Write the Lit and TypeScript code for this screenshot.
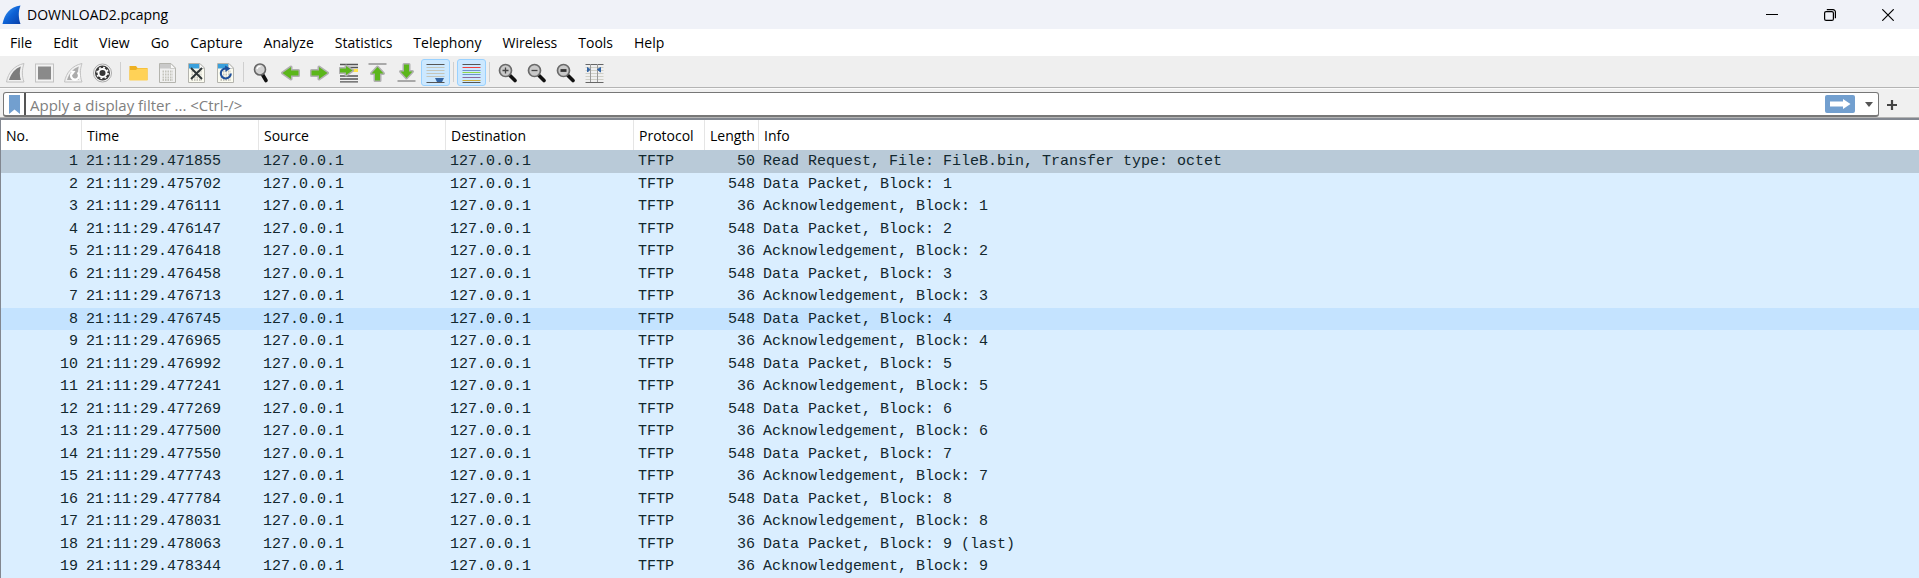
import { LitElement, html, css, svg } from "lit";
import { customElement, state } from "lit/decorators.js";

interface Packet {
  no: number;
  time: string;
  length: number;
  info: string;
}

const data = (no: number, time: string, block: number, length = 548, note = ""): Packet => ({
  no,
  time: `21:11:29.${time}`,
  length,
  info: `Data Packet, Block: ${block}${note}`,
});
const ack = (no: number, time: string, block: number): Packet => ({
  no,
  time: `21:11:29.${time}`,
  length: 36,
  info: `Acknowledgement, Block: ${block}`,
});

const PACKETS: Packet[] = [
  { no: 1, time: "21:11:29.471855", length: 50, info: "Read Request, File: FileB.bin, Transfer type: octet" },
  data(2, "475702", 1),
  ack(3, "476111", 1),
  data(4, "476147", 2),
  ack(5, "476418", 2),
  data(6, "476458", 3),
  ack(7, "476713", 3),
  data(8, "476745", 4),
  ack(9, "476965", 4),
  data(10, "476992", 5),
  ack(11, "477241", 5),
  data(12, "477269", 6),
  ack(13, "477500", 6),
  data(14, "477550", 7),
  ack(15, "477743", 7),
  data(16, "477784", 8),
  ack(17, "478031", 8),
  data(18, "478063", 9, 36, " (last)"),
  ack(19, "478344", 9),
];

const MENUS = ["File", "Edit", "View", "Go", "Capture", "Analyze", "Statistics", "Telephony", "Wireless", "Tools", "Help"];

const FIN = "M.5 19C2 10 8 2.500 18 .5C15.800 7 15.800 13 18 19Z";
const RIGHT_ARROW = "M1.5 7.500H9V4L17.500 10L9 16V12.500H1.500Z";

const page = (colour: string, paper: string) => svg`
  <path d="M1.500 .5H13L17.500 5V19.500H1.500Z" fill=${paper} stroke="#b4b4ae"/>
  <path d="M2 1H12.500V5.500H2Z" fill=${colour}/>
  <path d="M12.500 .5V5.500H17.500Z" fill="#f8f8f8" stroke="#b4b4ae" stroke-width=".6"/>
  <path d="M4.500 8.500H15M4.500 11.500H15M4.500 14.500H15M4.500 17H15" stroke="#c4c4bc" stroke-width="1.800" stroke-dasharray="1.500 1"/>`;

const lens = (inner: unknown) => svg`
  <path d="M12 12.500L17 17.500" stroke="#111" stroke-width="3.600" stroke-linecap="round"/>
  <circle cx="7.500" cy="7.500" r="6" fill="#c9c9c9" stroke="#6a6a6a" stroke-width="1.700"/>
  ${inner}`;

const verticalArrow = (d: string, bar: string) => svg`
  <path d=${bar} stroke="#a9a9a9" stroke-width="2"/>
  <path class="arrow" d=${d}/>`;

const GLYPHS: Record<string, unknown> = {
  start: svg`<path d=${FIN} fill="#f0f0f0" stroke="#c2c2c2"/><path d="M3 17C5 10.500 9 5.500 14.800 3.500C13.500 8 13.500 12.500 14.800 17Z" fill="#7c7c7c"/>`,
  stop: svg`<rect x=".5" y="1" width="18" height="18" fill="#f2f2f2" stroke="#c2c2c2"/><rect x="3" y="3.500" width="13" height="13" fill="#8a8a8a"/>`,
  restart: svg`<path d=${FIN} fill="#f0f0f0" stroke="#c2c2c2"/><path d="M3 17C5 10.500 9 5.500 14.800 3.500C13.500 8 13.500 12.500 14.800 17Z" fill="#acacac"/>
    <path d="M8 10A4 4 0 1 0 13.500 9.500" fill="none" stroke="#fff" stroke-width="2.200"/><path d="M6.500 7.500L11.500 8L8.500 12Z" fill="#fff"/>`,
  options: svg`<circle cx="9.500" cy="10" r="9" fill="#f5f5f5" stroke="#aaa"/><circle cx="9.500" cy="10" r="7.500" fill="#383838"/>
    <circle cx="9.500" cy="10" r="4" fill="none" stroke="#fff" stroke-width="1.900"/>
    <circle cx="9.500" cy="10" r="5.500" fill="none" stroke="#fff" stroke-width="1.600" stroke-dasharray="1.900 2.420"/><circle cx="9.500" cy="10" r="1.900" fill="#383838"/>`,
  open: svg`<path d="M.5 3H7L8.500 5H18.500V17H.5Z" fill="#eeb122"/><path d="M.5 7H7L8.500 5.500H18.500V17.500H.5Z" fill="#ffd257"/>`,
  save: page("#c9c9c9", "#f0f0f0"),
  close: svg`${page("#3aa0dc", "#fbfbf0")}<path d="M4 5L15 16M15 5L4 16" stroke="#2d3436" stroke-width="1.900"/>`,
  reload: svg`${page("#3aa0dc", "#fbfbf0")}<path d="M10.500 5.500A5 5 0 1 0 14.800 10.500" fill="none" stroke="#1f4f9a" stroke-width="2.100"/><path d="M9 2.500L14.500 5.500L9.500 9Z" fill="#1f4f9a"/>`,
  find: svg`<path d="M10.500 11.500L14 17.500" stroke="#111" stroke-width="3.600" stroke-linecap="round"/><circle cx="8" cy="6.500" r="5.500" fill="#d2d2d2" stroke="#666" stroke-width="1.600"/><path d="M5 6A3.200 3.200 0 0 1 8.500 3.500" fill="none" stroke="#fff" stroke-width="1.300"/>`,
  back: svg`<path class="arrow" d=${RIGHT_ARROW} transform="matrix(-1 0 0 1 19 0)"/>`,
  forward: svg`<path class="arrow" d=${RIGHT_ARROW}/>`,
  goto: svg`<path d="M1 1.500H19M9 4.500H19M1 13H19M1 16H19M1 18.800H19" stroke="#555" stroke-width="1.300"/><path d="M13 7.500H19" stroke="#ffe34d" stroke-width="3"/>
    <path class="arrow" d="M1 5.500H7V3L13.500 7.500L7 12V9.500H1Z"/>`,
  first: verticalArrow("M9.500 4L15.500 10.500H12V17.500H7V10.500H3.500Z", "M.5 1H18.500"),
  last: verticalArrow("M9.500 15L15.500 8.500H12V1.500H7V8.500H3.500Z", "M.5 18H18.500"),
  autoscroll: svg`<path d="M.5 1.500H18.500M.5 19.500H18.500" stroke="#555"/><path d="M.5 4.500H18.500M.5 7.500H18.500M.5 10.500H18.500M.5 13.500H18.500" stroke="#c5c5ba"/>
    <path d="M9 15H18L16 19H11Z" fill="#3465a4"/>`,
  colorize: svg`<path d="M.5 1.500H18.500M.5 19.500H18.500" stroke="#555"/><path d="M.5 4.500H18.500" stroke="#f0403c"/><path d="M.5 7.500H18.500" stroke="#6f93c8"/><path d="M.5 9.500H18.500" stroke="#8fd64c"/><path d="M.5 11.500H18.500" stroke="#6f93c8"/><path d="M.5 14.500H18.500" stroke="#8a6a9a"/><path d="M.5 17.500H18.500" stroke="#cfae3a"/>`,
  zoomIn: lens(svg`<path d="M4.500 7.500H10.500M7.500 4.500V10.500" stroke="#444" stroke-width="1.300"/>`),
  zoomOut: lens(svg`<path d="M4.500 7.500H10.500" stroke="#444" stroke-width="1.300"/>`),
  zoomReset: lens(svg`<path d="M4.500 7.500H10.500" stroke="#333" stroke-width="2.800"/>`),
  resize: svg`<path d="M.5 4.500H18.500M.5 7.500H18.500M.5 10.500H18.500M.5 13.500H18.500M.5 16.500H18.500" stroke="#cfcfc6"/><path d="M.5 1.500H18.500M.5 19.500H18.500" stroke="#666"/>
    <path d="M5.500 1V19M12.500 1V19" stroke="#999"/><path d="M2.500 4.500L5 6.500L2.500 9ZM15.500 4.500L12.500 6.500L15.500 9Z" fill="#3465a4" stroke="#3465a4"/>`,
};

interface Tool {
  glyph: string;
  label: string;
  toggle?: boolean;
}

const TOOL_GROUPS: Tool[][] = [
  [
    { glyph: "start", label: "Start capturing packets" },
    { glyph: "stop", label: "Stop capturing packets" },
    { glyph: "restart", label: "Restart current capture" },
    { glyph: "options", label: "Capture options" },
  ],
  [
    { glyph: "open", label: "Open a capture file" },
    { glyph: "save", label: "Save this capture file" },
    { glyph: "close", label: "Close this capture file" },
    { glyph: "reload", label: "Reload this file" },
  ],
  [
    { glyph: "find", label: "Find a packet" },
    { glyph: "back", label: "Go back in packet history" },
    { glyph: "forward", label: "Go forward in packet history" },
    { glyph: "goto", label: "Go to specified packet" },
    { glyph: "first", label: "Go to the first packet" },
    { glyph: "last", label: "Go to the last packet" },
    { glyph: "autoscroll", label: "Automatically scroll during live capture", toggle: true },
  ],
  [{ glyph: "colorize", label: "Draw packets using your coloring rules", toggle: true }],
  [
    { glyph: "zoomIn", label: "Enlarge the main window text" },
    { glyph: "zoomOut", label: "Shrink the main window text" },
    { glyph: "zoomReset", label: "Return the main window text to its normal size" },
    { glyph: "resize", label: "Resize packet list columns to fit contents" },
  ],
];

@customElement("app-root")
export class AppRoot extends LitElement {
  @state() private active = new Set(["autoscroll", "colorize"]);
  @state() private selected = 1;

  static styles = css`
    :host {
      display: block;
      background: #f0f0f0;
      color: #000;
      font: 14px/20px "Open Sans", "Noto Sans", sans-serif;
    }
    * { box-sizing: border-box; }
    button {
      margin: 0;
      padding: 0;
      border: 0;
      background: none;
      color: inherit;
      font: inherit;
    }
    svg { display: block; }
    .title {
      display: flex;
      align-items: center;
      height: 29px;
      padding: 0 2px;
      background: #f0f2f8;
    }
    .title h1 {
      flex: 1;
      margin: 0 0 0 6px;
      font-size: 14px;
      font-weight: 400;
    }
    .window-button {
      display: grid;
      place-items: center;
      width: 58px;
      height: 28px;
    }
    .menu {
      display: flex;
      gap: 1px;
      height: 27px;
      background: #fff;
    }
    .menu button { padding: 0 10px; }
    .tools {
      display: flex;
      align-items: center;
      height: 32px;
      padding: 2px 1px 0;
      border-bottom: 1px solid #b4b4b4;
      background: #efefef;
    }
    .group { display: flex; }
    .group + .group::before {
      content: "";
      width: 1px;
      height: 20px;
      margin: 3px;
      background: #cfcfcf;
    }
    .tool {
      display: grid;
      place-items: center;
      width: 29px;
      height: 27px;
      border: 1px solid transparent;
      border-radius: 3px;
    }
    .tool[aria-pressed="true"] {
      border-color: #99d1ff;
      background: #cce8ff;
    }
    .arrow {
      fill: #5bb61a;
      stroke: #b0b0b0;
      stroke-width: 3;
      stroke-linejoin: round;
      paint-order: stroke;
    }
    .filter {
      display: flex;
      align-items: center;
      padding: 3px 0 0 3px;
      border-top: 1px solid #fafafa;
      border-bottom: 1px solid #b4b4b4;
    }
    .field {
      display: flex;
      flex: 1;
      align-items: center;
      height: 25px;
      border: 1px solid #777;
      border-bottom-width: 2px;
      border-radius: 3px;
      background: #fff;
    }
    .bookmark {
      display: grid;
      place-items: center;
      align-self: stretch;
      width: 22px;
      border-right: 2px solid #555;
    }
    .field input {
      flex: 1;
      min-width: 0;
      height: 22px;
      padding: 1px 4px 0;
      border: 0;
      outline: 0;
      background: none;
      font: inherit;
      font-size: 15px;
    }
    .field input::placeholder { color: #808080; opacity: 1; }
    .drop {
      display: grid;
      place-items: center;
      width: 23px;
      height: 20px;
      padding-left: 4px;
    }
    .add {
      display: grid;
      place-items: center;
      width: 25px;
      height: 24px;
      margin-right: 15px;
    }
    .packets {
      width: 100%;
      border-top: 2px solid #828790;
      border-left: 1px solid #828790;
      border-spacing: 0;
      table-layout: fixed;
      background: #fff;
    }
    .c-no { width: 81px; }
    .c-time { width: 177px; }
    .c-source { width: 187px; }
    .c-destination { width: 188px; }
    .c-protocol { width: 71px; }
    .c-length { width: 54px; }
    th {
      height: 30px;
      padding: 2px 3px 0 5px;
      border-right: 1px solid #e5e5e5;
      font-weight: 400;
      text-align: left;
      white-space: nowrap;
      overflow: hidden;
    }
    th:last-child { border-right: 0; }
    td {
      height: 22px;
      padding: 2px 4px 0;
      background: #daeeff;
      color: #12272e;
      font: 15px/20px "Liberation Mono", monospace;
      white-space: pre;
      overflow: hidden;
    }
    tr:nth-child(odd) td {
      height: 23px;
      padding-top: 0;
    }
    .hovered td { background: #c4e3ff; }
    .selected td { background: #b9cad8; }
    .number { text-align: right; }
  `;

  private toggle(tool: Tool) {
    if (!tool.toggle) return;
    const next = new Set(this.active);
    if (!next.delete(tool.glyph)) next.add(tool.glyph);
    this.active = next;
  }

  private renderTool(tool: Tool) {
    return html`<button
      class="tool"
      aria-label=${tool.label}
      aria-pressed=${this.active.has(tool.glyph) ? "true" : "false"}
      @click=${() => this.toggle(tool)}
    ><svg width="19" height="20" viewBox="0 0 19 20">${GLYPHS[tool.glyph]}</svg></button>`;
  }

  private renderPacket(p: Packet) {
    const mark = p.no === this.selected ? "selected" : p.no === 8 ? "hovered" : "";
    return html`<tr class=${mark} @click=${() => (this.selected = p.no)}>
      <td class="number">${p.no}</td><td>${p.time}</td><td>127.0.0.1</td><td>127.0.0.1</td>
      <td>TFTP</td><td class="number">${p.length}</td><td>${p.info}</td>
    </tr>`;
  }

  render() {
    return html`
      <header class="title">
        <svg width="19" height="20" viewBox="0 0 19 20">
          <defs><linearGradient id="fin" x1="0" y1="0" x2="1" y2="1"><stop offset="0" stop-color="#4aa3f5"/><stop offset=".5" stop-color="#0d62d6"/><stop offset="1" stop-color="#0a3fa8"/></linearGradient></defs>
          <path d="M.5 19C2.500 9 8 1.500 18.500 .5C16 6.500 16.500 13 18.500 19Z" fill="url(#fin)"/>
        </svg>
        <h1>DOWNLOAD2.pcapng</h1>
        <button class="window-button" aria-label="Minimize"><svg width="12" height="12" viewBox="0 0 12 12"><path d="M0 5.500H12" stroke="#000"/></svg></button>
        <button class="window-button" aria-label="Restore"><svg width="12" height="12" viewBox="0 0 12 12" fill="none" stroke="#000" stroke-width="1.200"><rect x=".6" y="2.600" width="8.800" height="8.800" rx="1.500"/><path d="M2.800 .6H9A2.400 2.400 0 0 1 11.400 3V9.200"/></svg></button>
        <button class="window-button" aria-label="Close"><svg width="12" height="12" viewBox="0 0 12 12"><path d="M.3 .3L11.700 11.700M11.700 .3L.3 11.700" stroke="#000" stroke-width="1.200"/></svg></button>
      </header>
      <nav class="menu">${MENUS.map((m) => html`<button>${m}</button>`)}</nav>
      <div class="tools">${TOOL_GROUPS.map((g) => html`<div class="group">${g.map((t) => this.renderTool(t))}</div>`)}</div>
      <form class="filter" @submit=${(e: Event) => e.preventDefault()}>
        <div class="field">
          <button type="button" class="bookmark" aria-label="Manage saved bookmarks"><svg width="11" height="19" viewBox="0 0 11 19"><path d="M0 0H11V19L5.500 14.500L0 19Z" fill="#729fcf"/></svg></button>
          <input type="text" aria-label="Display filter" placeholder="Apply a display filter ... &lt;Ctrl-/&gt;" />
          <button type="submit" aria-label="Apply filter"><svg width="30" height="18" viewBox="0 0 30 18"><rect width="30" height="18" rx="2" fill="#729fcf"/><path d="M5 6.500H18V4L25.500 9L18 14V11.500H5Z" fill="#fff"/></svg></button>
          <button type="button" class="drop" aria-label="Recent filters"><svg width="8" height="5" viewBox="0 0 8 5"><path d="M0 0H8L4 5Z" fill="#555"/></svg></button>
        </div>
        <button type="button" class="add" aria-label="Add a filter button"><svg width="10" height="10" viewBox="0 0 10 10"><path d="M5 0V10M0 5H10" stroke="#444" stroke-width="2.200"/></svg></button>
      </form>
      <table class="packets">
        <colgroup>
          <col class="c-no" /><col class="c-time" /><col class="c-source" /><col class="c-destination" />
          <col class="c-protocol" /><col class="c-length" /><col />
        </colgroup>
        <thead>
          <tr><th>No.</th><th>Time</th><th>Source</th><th>Destination</th><th>Protocol</th><th>Length</th><th>Info</th></tr>
        </thead>
        <tbody>${PACKETS.map((p) => this.renderPacket(p))}</tbody>
      </table>
    `;
  }
}
